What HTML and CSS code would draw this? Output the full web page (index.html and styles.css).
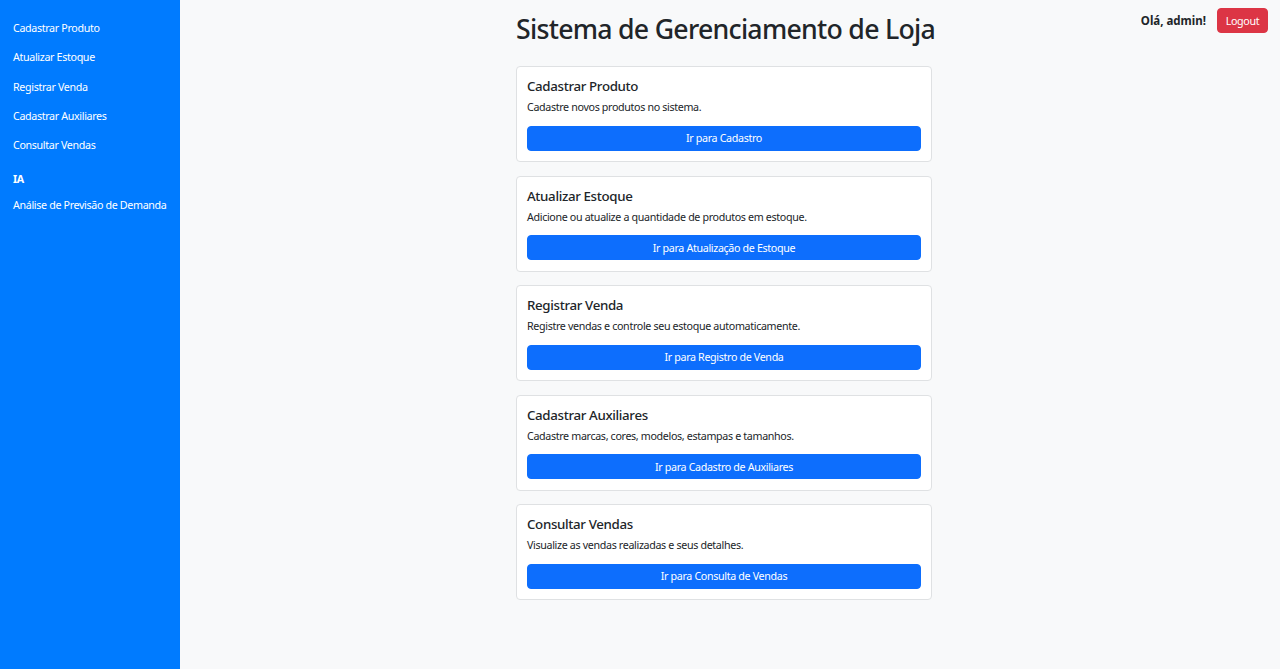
FILE: index.html
```html
<!DOCTYPE html>
<html lang="pt-BR">
<head>
<meta charset="utf-8">
<title>Sistema de Gerenciamento de Loja</title>
<link rel="stylesheet" href="styles.css">
</head>
<body>
<div class="layout">
  <aside class="sidebar">
    <nav class="nav">
      <a class="nav-link" href="#">Cadastrar Produto</a>
      <a class="nav-link" href="#">Atualizar Estoque</a>
      <a class="nav-link" href="#">Registrar Venda</a>
      <a class="nav-link" href="#">Cadastrar Auxiliares</a>
      <a class="nav-link" href="#">Consultar Vendas</a>
      <div class="nav-heading">IA</div>
      <a class="nav-link" href="#">Análise de Previsão de Demanda</a>
    </nav>
  </aside>
  <main class="main">
    <div class="user-box">
      <span class="greeting">Olá, admin!</span>
      <button class="btn btn-danger">Logout</button>
    </div>
    <div class="content">
      <h1 class="page-title">Sistema de Gerenciamento de Loja</h1>
      <div class="card">
        <h5 class="card-title">Cadastrar Produto</h5>
        <p class="card-text">Cadastre novos produtos no sistema.</p>
        <a class="btn btn-primary" href="#">Ir para Cadastro</a>
      </div>
      <div class="card">
        <h5 class="card-title">Atualizar Estoque</h5>
        <p class="card-text">Adicione ou atualize a quantidade de produtos em estoque.</p>
        <a class="btn btn-primary" href="#">Ir para Atualização de Estoque</a>
      </div>
      <div class="card">
        <h5 class="card-title">Registrar Venda</h5>
        <p class="card-text">Registre vendas e controle seu estoque automaticamente.</p>
        <a class="btn btn-primary" href="#">Ir para Registro de Venda</a>
      </div>
      <div class="card">
        <h5 class="card-title">Cadastrar Auxiliares</h5>
        <p class="card-text">Cadastre marcas, cores, modelos, estampas e tamanhos.</p>
        <a class="btn btn-primary" href="#">Ir para Cadastro de Auxiliares</a>
      </div>
      <div class="card">
        <h5 class="card-title">Consultar Vendas</h5>
        <p class="card-text">Visualize as vendas realizadas e seus detalhes.</p>
        <a class="btn btn-primary" href="#">Ir para Consulta de Vendas</a>
      </div>
    </div>
  </main>
</div>
</body>
</html>
```

FILE: styles.css
```css
* { box-sizing: border-box; }

html, body {
  margin: 0;
  height: 100%;
}

body {
  font-family: "Noto Sans", "Open Sans", "Liberation Sans", sans-serif;
  font-size: 10.7px;
  line-height: 1.5;
  letter-spacing: -0.34px;
  color: #212529;
  background: #f8f9fa;
}

.layout {
  display: flex;
  min-height: 100vh;
}

.sidebar {
  width: 180px;
  flex-shrink: 0;
  background: #007bff;
  padding: 20px 0 0 13px;
}

.nav {
  display: flex;
  flex-direction: column;
}

.nav-link {
  color: #ffffff;
  text-decoration: none;
  font-size: 10.7px;
  line-height: 16px;
  padding: 0;
  margin-bottom: 13.3px;
}

.nav-heading {
  color: #ffffff;
  font-weight: 700;
  font-size: 10.7px;
  line-height: 16px;
  margin: 5px 0 10px;
}

.main {
  flex: 1;
  position: relative;
  display: flex;
  justify-content: center;
  padding-right: 12px;
}

.user-box {
  position: absolute;
  top: 8px;
  right: 12px;
  display: flex;
  align-items: center;
  gap: 11px;
}

.greeting {
  font-weight: 700;
  font-size: 11.5px;
  letter-spacing: 0;
}

.btn {
  display: block;
  border: 1px solid transparent;
  border-radius: 4px;
  font-family: inherit;
  font-size: 10.7px;
  line-height: 16px;
  padding: 3.5px 8px;
  text-align: center;
  text-decoration: none;
  color: #ffffff;
  letter-spacing: inherit;
}

.btn-danger {
  background: #dc3545;
  border-color: #dc3545;
  height: 25px;
  width: 51px;
  padding: 0;
}

.btn-primary {
  background: #0d6efd;
  border-color: #0d6efd;
  height: 25px;
}

.content {
  width: 416px;
  display: flex;
  flex-direction: column;
}

.page-title {
  margin: 13px 0 21px;
  font-size: 26.7px;
  font-weight: 500;
  line-height: 32px;
  text-align: center;
  white-space: nowrap;
  letter-spacing: -0.73px;
}

.card {
  background: #ffffff;
  border: 1px solid #dfe1e3;
  border-radius: 4px;
  padding: 11px 10px 11px;
  margin-bottom: 13.5px;
  height: 96px;
}

.card-title {
  margin: 0 0 5.3px;
  font-size: 13.3px;
  font-weight: 500;
  line-height: 16px;
}

.card-text {
  margin: 0 0 10.7px;
  font-size: 10.7px;
  line-height: 16px;
}
```
